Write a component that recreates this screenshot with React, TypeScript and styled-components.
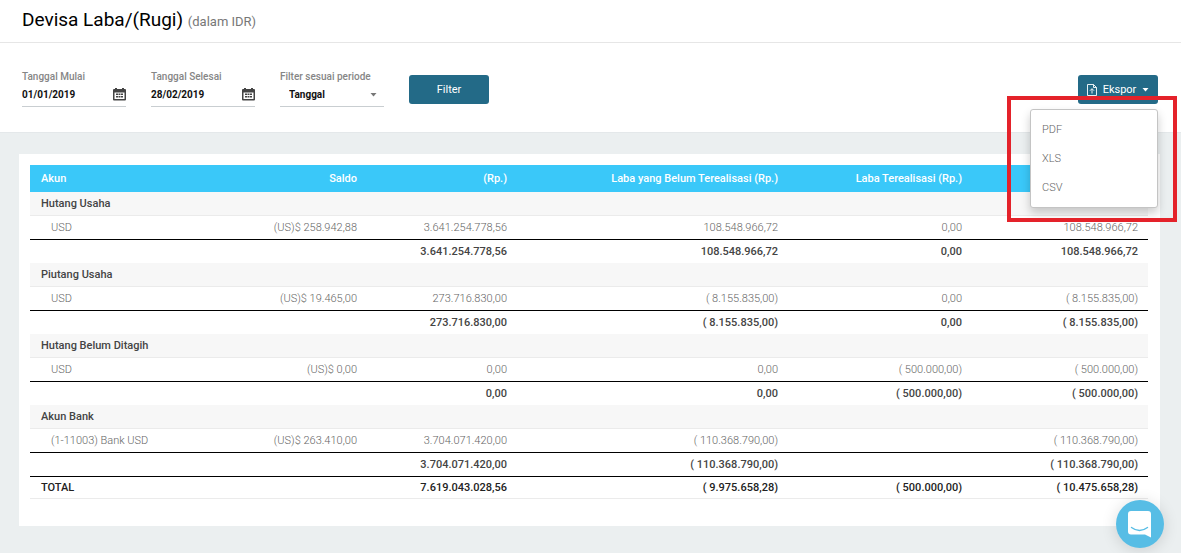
import React from 'react';
import styled, { createGlobalStyle } from 'styled-components';

const GlobalStyle = createGlobalStyle`
  *, *::before, *::after { box-sizing: border-box; }
  html { background: #ebeff0; }
  body {
    margin: 0;
    font-family: Roboto, "Liberation Sans", sans-serif;
    font-size: 11px;
    color: #777;
  }
  button, input, select { font-family: inherit; }
`;

const Page = styled.main`
  min-height: 100vh;
  background: #ebeff0;
`;

const TitleBar = styled.header`
  display: flex;
  align-items: center;
  padding: 0 22px;
  height: 43px;
  background: #fff;
  border-bottom: 1px solid #e6e6e6;
`;

const Title = styled.h1`
  margin: 0;
  font-size: 19px;
  line-height: 24px;
  font-weight: 400;
  color: #000;
`;

const Unit = styled.small`
  font-size: 13px;
  color: #777;
`;

const Toolbar = styled.form`
  display: flex;
  align-items: flex-start;
  gap: 25px;
  padding: 28px 23px 25px 22px;
  background: #fff;
  border-bottom: 1px solid #e4e8ea;
`;

const Field = styled.div`
  display: flex;
  flex-direction: column;
  width: 104px;
`;

const FieldLabel = styled.label`
  font-size: 10px;
  line-height: 12px;
  font-weight: 500;
  color: #868686;
  white-space: nowrap;
`;

const Control = styled.div<{ $inset?: boolean }>`
  display: flex;
  align-items: center;
  height: 24px;
  padding: 0 ${(p) => (p.$inset ? '7px 0 9px' : '0')};
  border-bottom: 1px solid #c9ced1;
`;

const DateInput = styled.input`
  flex: 1;
  min-width: 0;
  padding: 0;
  border: 0;
  outline: 0;
  background: transparent;
  font-size: 10px;
  font-weight: 700;
  color: #111;
`;

const PeriodSelect = styled.select`
  flex: 1;
  min-width: 0;
  padding: 0;
  border: 0;
  outline: 0;
  appearance: none;
  background: transparent;
  font-size: 10px;
  font-weight: 700;
  color: #111;
`;

const IconButton = styled.button`
  display: flex;
  padding: 0;
  border: 0;
  background: none;
  color: #444;
`;

const Button = styled.button`
  display: flex;
  align-items: center;
  justify-content: center;
  gap: 6px;
  width: 80px;
  height: 29px;
  padding: 0;
  border: 0;
  border-radius: 3px;
  background: #236a87;
  color: #fff;
  font-size: 11px;
  line-height: 16px;
`;

const ButtonSlot = styled.div`
  padding-top: 4px;
`;

const ExportSlot = styled(ButtonSlot)`
  position: relative;
  margin-left: auto;
`;

const Menu = styled.ul`
  position: absolute;
  z-index: 2;
  top: 38px;
  right: 0;
  width: 128px;
  margin: 0;
  padding: 5px 0;
  list-style: none;
  background: #fff;
  border: 1px solid #c4c4c4;
  border-radius: 3px;
  box-shadow: 0 5px 10px rgba(0, 0, 0, 0.2);
`;

const MenuLink = styled.a`
  display: block;
  padding: 0 11px;
  line-height: 29px;
  font-size: 11px;
  font-weight: 300;
  color: #666;
  text-decoration: none;
`;

const Highlight = styled.div`
  position: absolute;
  z-index: 3;
  top: 25px;
  right: -19px;
  width: 170px;
  height: 126px;
  border: 4px solid #e4222a;
  pointer-events: none;
`;

const Card = styled.section`
  margin: 21px 21px 0 19px;
  padding: 11px 12px 27px 11px;
  background: #fff;
`;

const Table = styled.table`
  width: 100%;
  table-layout: fixed;
  border-collapse: separate;
  border-spacing: 0;
`;

const Col = styled.col<{ $width: number }>`
  width: ${(p) => p.$width}px;
`;

const Cell = styled.td`
  padding: 0 10px;
  text-align: right;
  white-space: nowrap;
`;

const HeadCell = styled.th<{ $start?: boolean }>`
  height: 27px;
  padding: 0 ${(p) => (p.$start ? '11px' : '10px')};
  background: #3ac8f9;
  color: #fff;
  font-weight: 500;
  text-align: ${(p) => (p.$start ? 'left' : 'right')};
  white-space: nowrap;
`;

const GroupCell = styled.th`
  height: 24px;
  padding: 0 11px;
  background: #f7f7f7;
  border-bottom: 1px solid #ebebeb;
  color: #444;
  font-weight: 500;
  text-align: left;
`;

const DetailCell = styled(Cell)<{ $start?: boolean }>`
  height: 24px;
  padding-left: ${(p) => (p.$start ? '21px' : '10px')};
  text-align: ${(p) => (p.$start ? 'left' : 'right')};
  border-bottom: 1px solid #000;
  color: #666;
  font-weight: 300;
`;

const SubtotalCell = styled(Cell)`
  height: 23px;
  color: #444;
  font-weight: 500;
`;

const TotalCell = styled(Cell)<{ $start?: boolean }>`
  height: 23px;
  padding-left: ${(p) => (p.$start ? '11px' : '10px')};
  text-align: ${(p) => (p.$start ? 'left' : 'right')};
  border-top: 1px solid #000;
  border-bottom: 1px solid #ebebeb;
  color: #222;
  font-weight: 500;
`;

const ChatButton = styled.button`
  position: fixed;
  z-index: 4;
  right: 17px;
  bottom: 5px;
  display: flex;
  align-items: center;
  justify-content: center;
  width: 48px;
  height: 48px;
  padding: 0;
  border: 0;
  border-radius: 50%;
  background: #57bde5;
  box-shadow: 0 2px 16px rgba(0, 0, 0, 0.14);
`;

const CalendarIcon = () => (
  <svg width="13" height="13" viewBox="0 0 13 13" aria-hidden="true">
    <path
      fill="currentColor"
      fillRule="evenodd"
      d="M2 0h2v1h5V0h2v1h1q1 0 1 1v9.5q0 1-1 1H1q-1 0-1-1V2q0-1 1-1h1zM1.500 4.500v6.500h10V4.500z"
    />
    <path
      fill="currentColor"
      d="M3 5.500h2V7H3zM5.500 5.500h2V7h-2zM8 5.500h2V7H8zM3 8h2v1.500H3zM5.500 8h2v1.500h-2zM8 8h2v1.500H8z"
    />
  </svg>
);

const Caret = ({ color }: { color: string }) => (
  <svg width="7" height="4" viewBox="0 0 7 4" aria-hidden="true">
    <path fill={color} d="M0.500 0h6l-3 3.500z" />
  </svg>
);

const ExportIcon = () => (
  <svg width="10" height="12" viewBox="0 0 10 12" fill="none" stroke="#fff" strokeWidth="0.900" aria-hidden="true">
    <path d="M0.500 0.500h6l3 3v8h-9zM6.500 0.500v3h3M5 9.500V4.800M3 6.700l2-2 2 2" />
  </svg>
);

const ChatIcon = () => (
  <svg width="24" height="27" viewBox="0 0 24 27" aria-hidden="true">
    <path fill="#fff" d="M3 0h17q3 0 3 3v23.500l-6-3H3q-3 0-3-3V3q0-3 3-3z" />
    <path d="M3.500 16.500q8 6 16 0" fill="none" stroke="#57bde5" strokeWidth="1.400" strokeLinecap="round" />
  </svg>
);

const groups = [
  {
    name: 'Hutang Usaha',
    detail: ['USD', '(US)$ 258.942,88', '3.641.254.778,56', '108.548.966,72', '0,00', '108.548.966,72'],
    subtotal: ['3.641.254.778,56', '108.548.966,72', '0,00', '108.548.966,72'],
  },
  {
    name: 'Piutang Usaha',
    detail: ['USD', '(US)$ 19.465,00', '273.716.830,00', '( 8.155.835,00)', '0,00', '( 8.155.835,00)'],
    subtotal: ['273.716.830,00', '( 8.155.835,00)', '0,00', '( 8.155.835,00)'],
  },
  {
    name: 'Hutang Belum Ditagih',
    detail: ['USD', '(US)$ 0,00', '0,00', '0,00', '( 500.000,00)', '( 500.000,00)'],
    subtotal: ['0,00', '0,00', '( 500.000,00)', '( 500.000,00)'],
  },
  {
    name: 'Akun Bank',
    detail: ['(1-11003) Bank USD', '(US)$ 263.410,00', '3.704.071.420,00', '( 110.368.790,00)', '', '( 110.368.790,00)'],
    subtotal: ['3.704.071.420,00', '( 110.368.790,00)', '', '( 110.368.790,00)'],
  },
];

const headings = ['Akun', 'Saldo', '(Rp.)', 'Laba yang Belum Terealisasi (Rp.)', 'Laba Terealisasi (Rp.)', ''];
const total = ['TOTAL', '', '7.619.043.028,56', '( 9.975.658,28)', '( 500.000,00)', '( 10.475.658,28)'];
const exportFormats = ['PDF', 'XLS', 'CSV'];

const DateField = ({ id, label, value }: { id: string; label: string; value: string }) => (
  <Field>
    <FieldLabel htmlFor={id}>{label}</FieldLabel>
    <Control>
      <DateInput id={id} type="text" defaultValue={value} />
      <IconButton type="button" aria-label={label}>
        <CalendarIcon />
      </IconButton>
    </Control>
  </Field>
);

export default function App() {
  return (
    <Page>
      <GlobalStyle />
      <TitleBar>
        <Title>
          Devisa Laba/(Rugi) <Unit>(dalam IDR)</Unit>
        </Title>
      </TitleBar>
      <Toolbar onSubmit={(e) => e.preventDefault()}>
        <DateField id="start" label="Tanggal Mulai" value="01/01/2019" />
        <DateField id="end" label="Tanggal Selesai" value="28/02/2019" />
        <Field>
          <FieldLabel htmlFor="period">Filter sesuai periode</FieldLabel>
          <Control $inset>
            <PeriodSelect id="period">
              <option>Tanggal</option>
            </PeriodSelect>
            <Caret color="#777" />
          </Control>
        </Field>
        <ButtonSlot>
          <Button type="submit">Filter</Button>
        </ButtonSlot>
        <ExportSlot>
          <Button type="button" aria-haspopup="menu" aria-expanded="true">
            <ExportIcon />
            Ekspor
            <Caret color="#fff" />
          </Button>
          <Menu>
            {exportFormats.map((format) => (
              <li key={format}>
                <MenuLink href="#">{format}</MenuLink>
              </li>
            ))}
          </Menu>
          <Highlight />
        </ExportSlot>
      </Toolbar>
      <Card>
        <Table>
          <colgroup>
            <col />
            <Col $width={150} />
            <Col $width={150} />
            <Col $width={271} />
            <Col $width={184} />
            <Col $width={176} />
          </colgroup>
          <thead>
            <tr>
              {headings.map((heading, i) => (
                <HeadCell key={i} $start={i === 0}>
                  {heading}
                </HeadCell>
              ))}
            </tr>
          </thead>
          {groups.map((group) => (
            <tbody key={group.name}>
              <tr>
                <GroupCell colSpan={6}>{group.name}</GroupCell>
              </tr>
              <tr>
                {group.detail.map((value, i) => (
                  <DetailCell key={i} $start={i === 0}>
                    {value}
                  </DetailCell>
                ))}
              </tr>
              <tr>
                <SubtotalCell colSpan={2} />
                {group.subtotal.map((value, i) => (
                  <SubtotalCell key={i}>{value}</SubtotalCell>
                ))}
              </tr>
            </tbody>
          ))}
          <tfoot>
            <tr>
              {total.map((value, i) => (
                <TotalCell key={i} $start={i === 0}>
                  {value}
                </TotalCell>
              ))}
            </tr>
          </tfoot>
        </Table>
      </Card>
      <ChatButton type="button" aria-label="Chat">
        <ChatIcon />
      </ChatButton>
    </Page>
  );
}
